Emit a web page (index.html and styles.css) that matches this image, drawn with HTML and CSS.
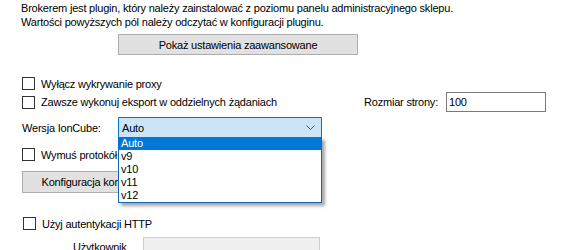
FILE: index.html
```html
<!DOCTYPE html>
<html lang="pl">
<head>
    <meta charset="UTF-8">
    <title>Ustawienia pluginu</title>
    <link rel="stylesheet" href="styles.css">
</head>
<body>
    <div class="panel">
        <p class="intro">Brokerem jest plugin, który należy zainstalować z poziomu panelu administracyjnego sklepu.<br>
        Wartości powyższych pól należy odczytać w konfiguracji pluginu.</p>

        <div class="advanced-row">
            <button class="btn btn-advanced" type="button">Pokaż ustawienia zaawansowane</button>
        </div>

        <!-- Proxy -->
        <label class="check-row row-proxy">
            <span class="box"></span>
            <span>Wyłącz wykrywanie proxy</span>
        </label>

        <!-- Export + page size -->
        <div class="row-export">
            <label class="check-row export-label">
                <span class="box"></span>
                <span>Zawsze wykonuj eksport w oddzielnych żądaniach</span>
            </label>
            <span class="page-size-label">Rozmiar strony:</span>
            <div class="textbox page-size">100</div>
        </div>

        <!-- IonCube -->
        <div class="row-ioncube">
            <span class="ioncube-label">Wersja IonCube:</span>
            <div class="combo">
                <div class="combo-value">
                    <span>Auto</span>
                    <svg class="chevron" width="9" height="5" viewBox="0 0 9 5">
                        <polyline points="0.5,0.5 4.5,4.5 8.5,0.5" fill="none" stroke="#5a5a5a" stroke-width="1"/>
                    </svg>
                </div>
                <ul class="combo-list">
                    <li class="selected">Auto</li>
                    <li>v9</li>
                    <li>v10</li>
                    <li>v11</li>
                    <li>v12</li>
                </ul>
            </div>
        </div>

        <!-- Protocol -->
        <label class="check-row row-protocol">
            <span class="box"></span>
            <span>Wymuś protokół HTTP 1.0</span>
        </label>

        <div class="config-row">
            <button class="btn btn-config" type="button">Konfiguracja komunikacji</button>
        </div>

        <!-- HTTP auth -->
        <label class="check-row row-auth">
            <span class="box"></span>
            <span>Użyj autentykacji HTTP</span>
        </label>

        <div class="row-user">
            <span class="user-label">Użytkownik</span>
            <div class="textbox disabled user-input"></div>
        </div>
    </div>
</body>
</html>
```

FILE: styles.css
```css
body {
    margin: 0;
    background: #ffffff;
    font-family: "Liberation Sans", Arial, sans-serif;
    font-size: 11px;
    letter-spacing: -0.2px;
    color: #000000;
    overflow: hidden;
}

.panel {
    width: 575px;
    height: 250px;
    padding-left: 21px;
    box-sizing: border-box;
}

/* Intro text */
.intro {
    margin: 0;
    padding-top: 1px;
    line-height: 14px;
}

/* Buttons */
.btn {
    font-family: inherit;
    font-size: 11px;
    letter-spacing: -0.2px;
    color: #000000;
    background: #e1e1e1;
    border: 1px solid #adadad;
    padding: 0;
    margin: 0;
}

.advanced-row {
    margin-top: 5px;
    padding-left: 97px;
}

.btn-advanced {
    width: 240px;
    height: 21px;
}

/* Checkbox rows */
.check-row {
    display: flex;
    align-items: center;
    gap: 6px;
    height: 13px;
}

.box {
    width: 13px;
    height: 13px;
    box-sizing: border-box;
    border: 1px solid #333333;
    background: #ffffff;
    flex: none;
}

.row-proxy {
    margin-top: 22px;
    padding-left: 1px;
}

.row-export {
    display: flex;
    align-items: center;
    height: 20px;
    margin-top: 2px;
}

.export-label {
    width: 342px;
    padding-left: 1px;
}

.page-size-label {
    width: 82px;
}

.textbox {
    box-sizing: border-box;
    height: 20px;
    border: 1px solid #7a7a7a;
    background: #ffffff;
    padding: 2px 0 0 2px;
    line-height: 15px;
}

.page-size {
    width: 100px;
}

/* IonCube combo */
.row-ioncube {
    display: flex;
    align-items: center;
    height: 21px;
    margin-top: 5px;
}

.ioncube-label {
    width: 96px;
    padding-left: 1px;
}

.combo {
    position: relative;
    width: 204px;
    height: 21px;
}

.combo-value {
    box-sizing: border-box;
    height: 21px;
    border: 1px solid #0078d7;
    background: #cce4f7;
    display: flex;
    align-items: center;
    justify-content: space-between;
    padding: 0 6px 0 3px;
}

.chevron {
    display: block;
}

.combo-list {
    position: absolute;
    left: 0;
    top: 20px;
    width: 204px;
    box-sizing: border-box;
    margin: 0;
    padding: 0;
    list-style: none;
    background: #ffffff;
    border: 1px solid #1664b4;
    border-top: none;
    box-shadow: 3px 3px 3px rgba(0, 0, 0, 0.35);
    z-index: 2;
}

.combo-list li {
    height: 13px;
    line-height: 13px;
    padding-left: 2px;
}

.combo-list .selected {
    background: #0078d7;
    color: #ffffff;
}

.row-protocol {
    margin-top: 10px;
    padding-left: 1px;
}

.config-row {
    margin-top: 10px;
    padding-left: 1px;
}

.btn-config {
    width: 156px;
    height: 22px;
}

.row-auth {
    margin-top: 24px;
    padding-left: 2px;
}

.row-user {
    display: flex;
    align-items: flex-start;
    margin-top: 7px;
}

.user-label {
    padding-left: 52px;
    padding-top: 4px;
    box-sizing: border-box;
    width: 122px;
}

.textbox.disabled {
    background: #f0f0f0;
    border-color: #cccccc;
}

.user-input {
    width: 177px;
}
```
